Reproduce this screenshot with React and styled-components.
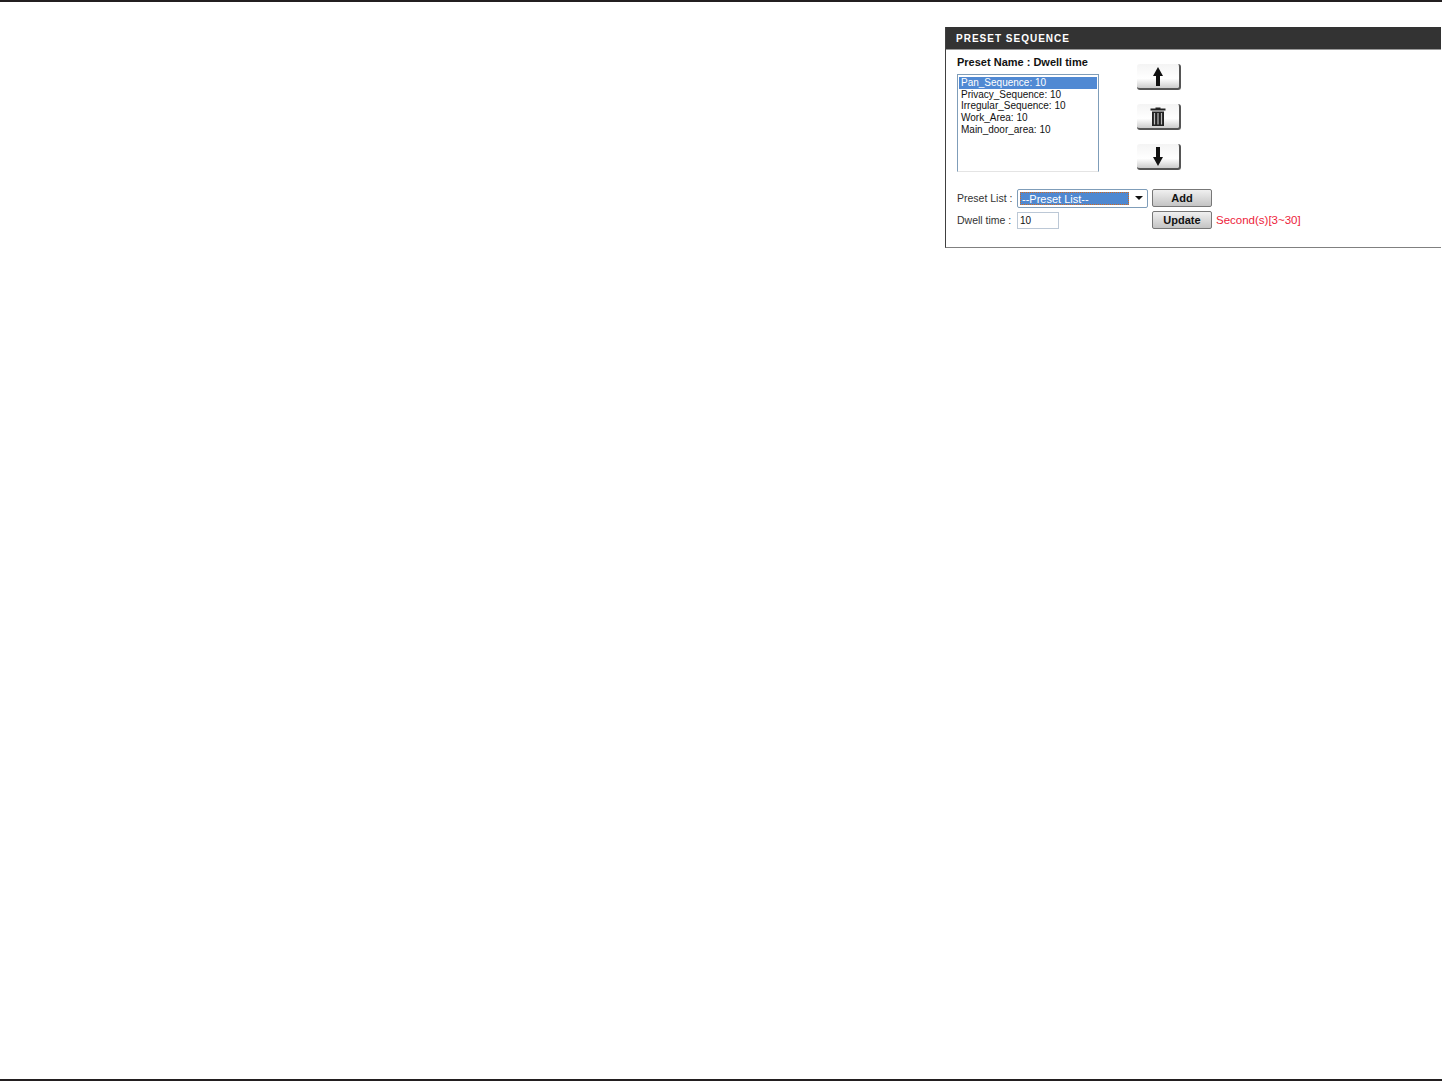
import styled, { createGlobalStyle } from "styled-components";

const GlobalStyle = createGlobalStyle`
  html, body {
    margin: 0;
    padding: 0;
    background: #fff;
  }
  body {
    font-family: "Liberation Sans", Arial, sans-serif;
    color: #231f20;
  }
`;

const sequences = [
  "Pan_Sequence: 10",
  "Privacy_Sequence: 10",
  "Irregular_Sequence: 10",
  "Work_Area: 10",
  "Main_door_area: 10",
];

const UpIcon = () => (
  <svg width="10" height="19" viewBox="0 0 10 19">
    <path d="M5 0 L10 9 H7 V19 H3 V9 H0 Z" fill="#111" />
  </svg>
);

const DownIcon = () => (
  <svg width="10" height="19" viewBox="0 0 10 19">
    <path d="M5 19 L10 10 H7 V0 H3 V10 H0 Z" fill="#111" />
  </svg>
);

const TrashIcon = () => (
  <svg width="16" height="19" viewBox="0 0 16 19">
    <path d="M5.5 1.5 V0.5 H10.5 V1.5 H15.5 V3.5 H0.5 V1.5 Z" fill="#222" />
    <path d="M2 4.5 H14 V19 H2 Z" fill="#222" />
    <path d="M4.5 6 V17.5 M8 6 V17.5 M11.5 6 V17.5" stroke="#bbb" strokeWidth="1.2" />
  </svg>
);

const App = () => {
  return (
    <Page>
      <GlobalStyle />
      <Rule />
      <Main>
        <Panel>
          <PanelTitle>PRESET SEQUENCE</PanelTitle>
          <PanelBody>
            <PresetName>Preset Name : Dwell time</PresetName>
            <SequenceArea>
              <SequenceList>
                {sequences.map((item, i) => (
                  <SequenceItem key={item} $selected={i === 0}>
                    {item}
                  </SequenceItem>
                ))}
              </SequenceList>
              <MoveButtons>
                <MoveButton><UpIcon /></MoveButton>
                <MoveButton><TrashIcon /></MoveButton>
                <MoveButton><DownIcon /></MoveButton>
              </MoveButtons>
            </SequenceArea>
            <FormRow>
              <FieldLabel>Preset List :</FieldLabel>
              <PresetSelect>
                <SelectValue>--Preset List--</SelectValue>
                <SelectCaret />
              </PresetSelect>
              <FormButton>Add</FormButton>
            </FormRow>
            <FormRow $second>
              <FieldLabel>Dwell time :</FieldLabel>
              <DwellInput>10</DwellInput>
              <FormButton $offset>Update</FormButton>
              <Hint>Second(s)[3~30]</Hint>
            </FormRow>
          </PanelBody>
        </Panel>
      </Main>
      <Rule />
    </Page>
  );
};

const Page = styled.div`
  display: flex;
  flex-direction: column;
  height: 1081px;
  overflow: hidden;
`;

const Rule = styled.div`
  height: 2px;
  flex: none;
  background: #231f20;
`;

const Main = styled.main`
  flex: 1;
  display: flex;
  justify-content: flex-end;
  align-items: flex-start;
  padding: 25px 1px 0 0;
`;

const Panel = styled.section`
  width: 496px;
  height: 221px;
  box-sizing: border-box;
  border-left: 1px solid #404040;
  border-bottom: 1px solid #808080;
`;

const PanelTitle = styled.h2`
  margin: 0;
  height: 22px;
  padding-left: 10px;
  background: #333;
  border-bottom: 1px solid #999;
  color: #fff;
  font-size: 10px;
  font-weight: bold;
  letter-spacing: 1px;
  line-height: 24px;
`;

const PanelBody = styled.div`
  padding: 5px 0 0 11px;
`;

const PresetName = styled.div`
  height: 14px;
  font-size: 11px;
  font-weight: bold;
  line-height: 14px;
  color: #111;
`;

const SequenceArea = styled.div`
  display: flex;
  margin-top: 5px;
`;

const SequenceList = styled.div`
  width: 142px;
  height: 98px;
  box-sizing: border-box;
  padding: 2px 1px 0 1px;
  border: 1px solid #7f9db9;
  border-bottom-color: #e4e4e4;
`;

const SequenceItem = styled.div`
  height: 11.7px;
  padding-left: 2px;
  font-size: 10px;
  line-height: 11.7px;
  white-space: nowrap;
  color: ${(props) => (props.$selected ? "#fff" : "#111")};
  background: ${(props) => (props.$selected ? "#5089d3" : "transparent")};
`;

const MoveButtons = styled.div`
  display: flex;
  flex-direction: column;
  gap: 14px;
  margin: -10px 0 0 38px;
`;

const MoveButton = styled.div`
  width: 44px;
  height: 26px;
  box-sizing: border-box;
  display: flex;
  align-items: center;
  justify-content: center;
  border-radius: 3px;
  background: linear-gradient(#f4f4f4 0%, #fff 60%, #ccc 100%);
  border-right: 2px solid #555;
  border-bottom: 2px solid #555;
`;

const FormRow = styled.div`
  display: flex;
  align-items: center;
  height: 22px;
  margin-top: ${(props) => (props.$second ? "0" : "15px")};
`;

const FieldLabel = styled.span`
  width: 60px;
  flex: none;
  font-size: 10.5px;
  color: #333;
  white-space: nowrap;
`;

const PresetSelect = styled.div`
  width: 131px;
  height: 19px;
  box-sizing: border-box;
  display: flex;
  align-items: center;
  padding-left: 2px;
  border: 1px solid #7f9db9;
  border-radius: 2px;
`;

const SelectValue = styled.span`
  width: 109px;
  height: 13px;
  box-sizing: border-box;
  padding-left: 1px;
  background: #4f88d0;
  border: 1px dotted #d2691e;
  color: #fff;
  font-size: 11px;
  line-height: 12px;
`;

const SelectCaret = styled.span`
  margin-left: 6px;
  border-left: 4px solid transparent;
  border-right: 4px solid transparent;
  border-top: 4px solid #111;
`;

const DwellInput = styled.div`
  width: 42px;
  height: 17px;
  box-sizing: border-box;
  padding-left: 2px;
  border: 1px solid #bcc8d6;
  font-size: 10px;
  line-height: 15px;
  color: #111;
`;

const FormButton = styled.div`
  width: 60px;
  height: 18px;
  box-sizing: border-box;
  margin-left: ${(props) => (props.$offset ? "93px" : "4px")};
  text-align: center;
  border: 1px solid #777;
  border-radius: 2px;
  background: linear-gradient(#f0f0f0, #c4c4c4);
  color: #111;
  font-size: 11px;
  font-weight: bold;
  line-height: 16px;
`;

const Hint = styled.span`
  margin-left: 4px;
  font-size: 11.5px;
  color: #ed1c3a;
  white-space: nowrap;
`;

export default App;
